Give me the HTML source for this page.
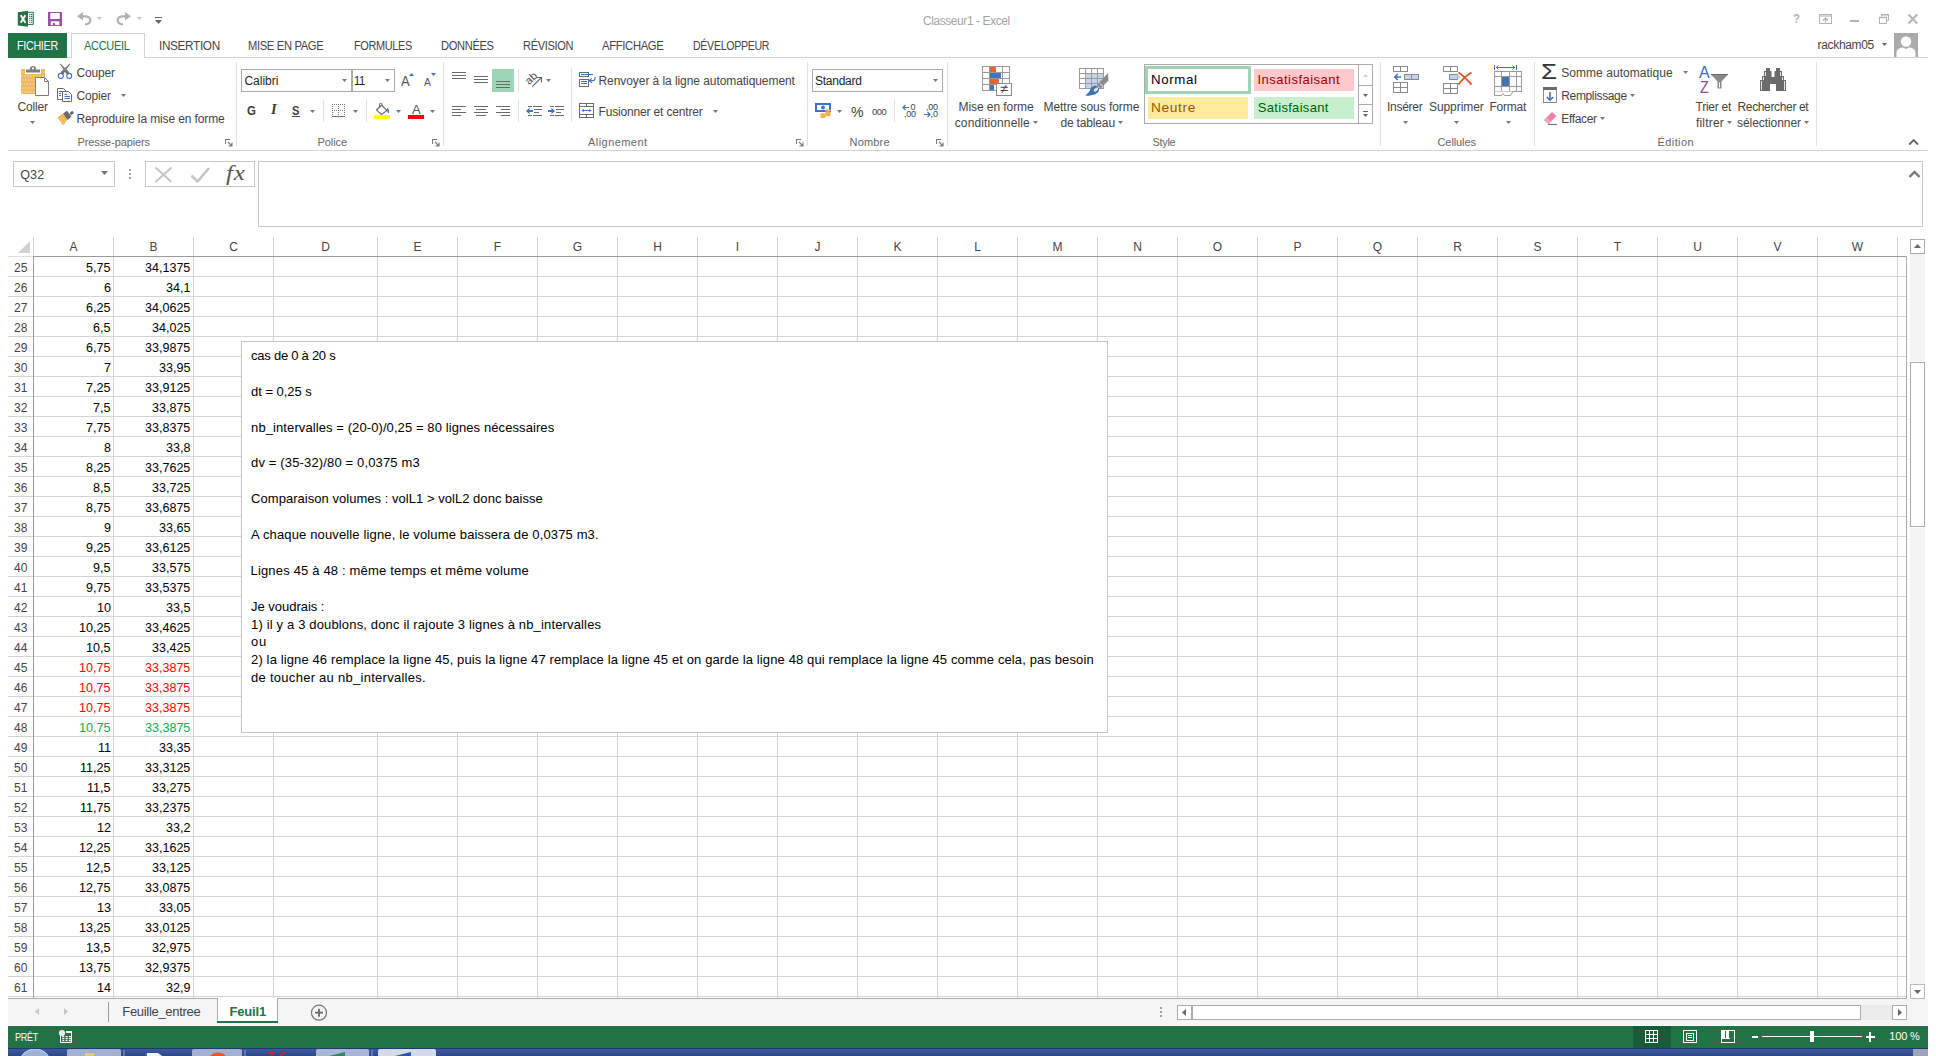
<!DOCTYPE html>
<html lang="fr"><head><meta charset="utf-8"><title>Classeur1 - Excel</title><style>
html,body{margin:0;padding:0;background:#fff;}
body{width:1936px;height:1056px;position:relative;overflow:hidden;font-family:"Liberation Sans",sans-serif;}
body>div,body>span,body>svg{position:absolute;display:block;}
body>span{white-space:pre;line-height:20px;transform-origin:0 0;}
.s{font-family:"Liberation Serif",serif;}
</style></head><body>
<span style="left:923.20px;top:10.84px;letter-spacing:-0.350px;transform:scaleX(0.9856);font-size:12px;color:#a3a3a3;">Classeur1 - Excel</span>
<div style="left:8px;top:33px;width:59px;height:25px;background:#217346;"></div>
<div style="left:67px;top:57px;width:1861px;height:1px;background:#d4d4d4;"></div>
<div style="left:71px;top:33px;width:72px;height:24px;background:#fff;border:1px solid #d4d4d4;border-bottom:none;height:24px;"></div>
<span style="left:16.50px;top:36.24px;letter-spacing:-0.350px;transform:scaleX(0.8976);font-size:12px;color:#fff;">FICHIER</span>
<span style="left:84.40px;top:36.24px;letter-spacing:-0.350px;transform:scaleX(0.9196);font-size:12px;color:#217346;">ACCUEIL</span>
<span style="left:158.52px;top:36.24px;letter-spacing:-0.350px;transform:scaleX(0.9810);font-size:12px;color:#444;">INSERTION</span>
<span style="left:248.40px;top:36.24px;letter-spacing:-0.350px;transform:scaleX(0.9302);font-size:12px;color:#444;">MISE EN PAGE</span>
<span style="left:353.50px;top:36.24px;letter-spacing:-0.350px;transform:scaleX(0.9078);font-size:12px;color:#444;">FORMULES</span>
<span style="left:441.20px;top:36.24px;letter-spacing:-0.350px;transform:scaleX(0.9259);font-size:12px;color:#444;">DONNÉES</span>
<span style="left:523.00px;top:36.24px;letter-spacing:-0.350px;transform:scaleX(0.9183);font-size:12px;color:#444;">RÉVISION</span>
<span style="left:602.00px;top:36.24px;letter-spacing:-0.350px;transform:scaleX(0.9382);font-size:12px;color:#444;">AFFICHAGE</span>
<span style="left:693.00px;top:36.24px;letter-spacing:-0.350px;transform:scaleX(0.8841);font-size:12px;color:#444;">DÉVELOPPEUR</span>
<span style="left:1817.50px;top:34.84px;letter-spacing:-0.323px;font-size:12px;color:#444;">rackham05</span>
<svg style="left:1882px;top:43px" width="5" height="3" viewBox="0 0 5 3"><path d="M0 0H5L2.5 3Z" fill="#666"/></svg>
<div style="left:8px;top:150px;width:1920px;height:1px;background:#d4d4d4;"></div>
<div style="left:236px;top:62px;width:1px;height:84px;background:#e1e1e1;"></div>
<div style="left:443px;top:62px;width:1px;height:84px;background:#e1e1e1;"></div>
<div style="left:807px;top:62px;width:1px;height:84px;background:#e1e1e1;"></div>
<div style="left:947px;top:62px;width:1px;height:84px;background:#e1e1e1;"></div>
<div style="left:1380px;top:62px;width:1px;height:84px;background:#e1e1e1;"></div>
<div style="left:1534px;top:62px;width:1px;height:84px;background:#e1e1e1;"></div>
<div style="left:1816px;top:62px;width:1px;height:84px;background:#e1e1e1;"></div>
<div style="left:323px;top:100px;width:1px;height:22px;background:#e1e1e1;"></div>
<div style="left:366px;top:100px;width:1px;height:22px;background:#e1e1e1;"></div>
<div style="left:518px;top:69px;width:1px;height:23px;background:#e1e1e1;"></div>
<div style="left:518px;top:100px;width:1px;height:22px;background:#e1e1e1;"></div>
<div style="left:571px;top:68px;width:1px;height:54px;background:#e1e1e1;"></div>
<div style="left:894px;top:100px;width:1px;height:22px;background:#e1e1e1;"></div>
<span style="left:77.50px;top:132.19px;letter-spacing:-0.106px;font-size:11px;color:#666;">Presse-papiers</span>
<span style="left:317.50px;top:132.19px;letter-spacing:-0.088px;font-size:11px;color:#666;">Police</span>
<span style="left:588.00px;top:132.19px;letter-spacing:0.447px;font-size:11px;color:#666;">Alignement</span>
<span style="left:849.60px;top:132.19px;letter-spacing:0.159px;font-size:11px;color:#666;">Nombre</span>
<span style="left:1152.50px;top:132.19px;letter-spacing:-0.309px;font-size:11px;color:#666;">Style</span>
<span style="left:1437.50px;top:132.19px;letter-spacing:-0.090px;font-size:11px;color:#666;">Cellules</span>
<span style="left:1657.50px;top:132.19px;letter-spacing:0.414px;font-size:11px;color:#666;">Édition</span>
<span style="left:17.50px;top:96.84px;letter-spacing:-0.169px;font-size:12px;color:#444;">Coller</span>
<svg style="left:30px;top:121px" width="5" height="3" viewBox="0 0 5 3"><path d="M0 0H5L2.5 3Z" fill="#777"/></svg>
<span style="left:76.50px;top:62.84px;letter-spacing:-0.172px;font-size:12px;color:#444;">Couper</span>
<span style="left:76.50px;top:85.84px;letter-spacing:-0.171px;font-size:12px;color:#444;">Copier</span>
<svg style="left:121px;top:94px" width="5" height="3" viewBox="0 0 5 3"><path d="M0 0H5L2.5 3Z" fill="#777"/></svg>
<span style="left:76.50px;top:108.84px;letter-spacing:-0.124px;font-size:12px;color:#444;">Reproduire la mise en forme</span>
<div style="left:241px;top:69px;width:109px;height:21px;background:#fff;border:1px solid #ababab;"></div>
<div style="left:352px;top:69px;width:41px;height:21px;background:#fff;border:1px solid #ababab;"></div>
<span style="left:244.40px;top:70.84px;font-size:12px;color:#1e1e1e;">Calibri</span>
<svg style="left:342px;top:79px" width="5" height="3" viewBox="0 0 5 3"><path d="M0 0H5L2.5 3Z" fill="#777"/></svg>
<span style="left:354.40px;top:70.84px;letter-spacing:-0.350px;transform:scaleX(0.9330);font-size:12px;color:#1e1e1e;">11</span>
<svg style="left:385px;top:79px" width="5" height="3" viewBox="0 0 5 3"><path d="M0 0H5L2.5 3Z" fill="#777"/></svg>
<span style="left:247.25px;top:100.50px;transform:scaleX(0.8750);font-size:13px;color:#3c3c3c;font-weight:bold;">G</span>
<span class="s" style="left:271.04px;top:100.15px;transform:scaleX(1.0357);font-size:14px;color:#3c3c3c;font-weight:bold;font-style:italic;">I</span>
<span style="left:292.00px;top:100.50px;transform:scaleX(0.8611);font-size:13px;color:#3c3c3c;font-weight:bold;">S</span>
<div style="left:292px;top:116px;width:8px;height:1px;background:#444;"></div>
<svg style="left:310px;top:110px" width="5" height="3" viewBox="0 0 5 3"><path d="M0 0H5L2.5 3Z" fill="#777"/></svg>
<svg style="left:353px;top:110px" width="5" height="3" viewBox="0 0 5 3"><path d="M0 0H5L2.5 3Z" fill="#777"/></svg>
<svg style="left:396px;top:110px" width="5" height="3" viewBox="0 0 5 3"><path d="M0 0H5L2.5 3Z" fill="#777"/></svg>
<svg style="left:430px;top:110px" width="5" height="3" viewBox="0 0 5 3"><path d="M0 0H5L2.5 3Z" fill="#777"/></svg>
<div style="left:492px;top:69px;width:22px;height:23px;background:#9fd5b7;"></div>
<span style="left:598.50px;top:70.84px;letter-spacing:-0.069px;font-size:12px;color:#444;">Renvoyer à la ligne automatiquement</span>
<span style="left:598.50px;top:101.84px;letter-spacing:-0.165px;font-size:12px;color:#444;">Fusionner et centrer</span>
<svg style="left:713px;top:110px" width="5" height="3" viewBox="0 0 5 3"><path d="M0 0H5L2.5 3Z" fill="#777"/></svg>
<svg style="left:546px;top:79px" width="5" height="3" viewBox="0 0 5 3"><path d="M0 0H5L2.5 3Z" fill="#777"/></svg>
<div style="left:812px;top:69px;width:129px;height:21px;background:#fff;border:1px solid #ababab;"></div>
<span style="left:815.00px;top:70.84px;letter-spacing:-0.254px;font-size:12px;color:#1e1e1e;">Standard</span>
<svg style="left:933px;top:79px" width="5" height="3" viewBox="0 0 5 3"><path d="M0 0H5L2.5 3Z" fill="#777"/></svg>
<svg style="left:837px;top:110px" width="5" height="3" viewBox="0 0 5 3"><path d="M0 0H5L2.5 3Z" fill="#777"/></svg>
<span style="left:851.25px;top:101.80px;transform:scaleX(0.9423);font-size:15px;color:#444;">%</span>
<span style="left:871.50px;top:101.51px;letter-spacing:-0.350px;transform:scaleX(0.9753);font-size:9.5px;color:#3c3c3c;">000</span>
<span style="left:958.50px;top:96.84px;letter-spacing:-0.071px;font-size:12px;color:#444;">Mise en forme</span>
<span style="left:954.75px;top:112.84px;letter-spacing:0.118px;font-size:12px;color:#444;">conditionnelle</span>
<svg style="left:1033px;top:121px" width="5" height="3" viewBox="0 0 5 3"><path d="M0 0H5L2.5 3Z" fill="#777"/></svg>
<span style="left:1043.50px;top:96.84px;letter-spacing:-0.048px;font-size:12px;color:#444;">Mettre sous forme</span>
<span style="left:1060.40px;top:112.84px;letter-spacing:-0.153px;font-size:12px;color:#444;">de tableau</span>
<svg style="left:1118px;top:121px" width="5" height="3" viewBox="0 0 5 3"><path d="M0 0H5L2.5 3Z" fill="#777"/></svg>
<div style="left:1144px;top:64px;width:227px;height:58px;background:#fff;border:1px solid #ababab;"></div>
<div style="left:1358px;top:65px;width:1px;height:58px;background:#ababab;"></div>
<div style="left:1359px;top:85px;width:13px;height:1px;background:#ababab;"></div>
<div style="left:1359px;top:104px;width:13px;height:1px;background:#ababab;"></div>
<div style="left:1145px;top:66px;width:106px;height:28px;background:#9fd5b7;"></div>
<div style="left:1148px;top:69px;width:100px;height:22px;background:#fff;"></div>
<div style="left:1254px;top:69px;width:100px;height:22px;background:#ffc7ce;"></div>
<div style="left:1148px;top:97px;width:100px;height:22px;background:#ffeb9c;"></div>
<div style="left:1254px;top:97px;width:100px;height:22px;background:#c6efce;"></div>
<span style="left:1151.48px;top:69.50px;letter-spacing:0.600px;transform:scaleX(1.0226);font-size:13px;color:#000;">Normal</span>
<span style="left:1257.40px;top:69.50px;letter-spacing:0.488px;font-size:13px;color:#9c0006;">Insatisfaisant</span>
<span style="left:1151.44px;top:97.50px;letter-spacing:0.600px;transform:scaleX(1.0567);font-size:13px;color:#9c5700;">Neutre</span>
<span style="left:1257.75px;top:97.50px;letter-spacing:0.310px;font-size:13px;color:#006100;">Satisfaisant</span>
<span style="left:1387.00px;top:96.84px;letter-spacing:-0.267px;font-size:12px;color:#444;">Insérer</span>
<svg style="left:1403px;top:121px" width="5" height="3" viewBox="0 0 5 3"><path d="M0 0H5L2.5 3Z" fill="#777"/></svg>
<span style="left:1429.00px;top:96.84px;letter-spacing:-0.076px;font-size:12px;color:#444;">Supprimer</span>
<svg style="left:1454px;top:121px" width="5" height="3" viewBox="0 0 5 3"><path d="M0 0H5L2.5 3Z" fill="#777"/></svg>
<span style="left:1489.40px;top:96.84px;letter-spacing:-0.214px;font-size:12px;color:#444;">Format</span>
<svg style="left:1506px;top:121px" width="5" height="3" viewBox="0 0 5 3"><path d="M0 0H5L2.5 3Z" fill="#777"/></svg>
<span style="left:1561.25px;top:62.84px;letter-spacing:0.044px;font-size:12px;color:#444;">Somme automatique</span>
<svg style="left:1683px;top:71px" width="5" height="3" viewBox="0 0 5 3"><path d="M0 0H5L2.5 3Z" fill="#777"/></svg>
<span style="left:1561.25px;top:85.84px;letter-spacing:-0.350px;font-size:12px;color:#444;">Remplissage</span>
<svg style="left:1630px;top:94px" width="5" height="3" viewBox="0 0 5 3"><path d="M0 0H5L2.5 3Z" fill="#777"/></svg>
<span style="left:1561.25px;top:108.84px;letter-spacing:-0.350px;font-size:12px;color:#444;">Effacer</span>
<svg style="left:1600px;top:117px" width="5" height="3" viewBox="0 0 5 3"><path d="M0 0H5L2.5 3Z" fill="#777"/></svg>
<span style="left:1695.60px;top:96.84px;letter-spacing:-0.275px;font-size:12px;color:#444;">Trier et</span>
<span style="left:1696.00px;top:112.84px;letter-spacing:0.180px;font-size:12px;color:#444;">filtrer</span>
<svg style="left:1727px;top:121px" width="5" height="3" viewBox="0 0 5 3"><path d="M0 0H5L2.5 3Z" fill="#777"/></svg>
<span style="left:1737.50px;top:96.84px;letter-spacing:-0.350px;font-size:12px;color:#444;">Rechercher et</span>
<span style="left:1737.00px;top:112.84px;letter-spacing:-0.064px;font-size:12px;color:#444;">sélectionner</span>
<svg style="left:1804px;top:121px" width="5" height="3" viewBox="0 0 5 3"><path d="M0 0H5L2.5 3Z" fill="#777"/></svg>
<div style="left:13px;top:161px;width:100px;height:24px;background:#fff;border:1px solid #c6c6c6;"></div>
<span style="left:20.20px;top:165.07px;letter-spacing:0.163px;font-size:12.5px;color:#444;">Q32</span>
<svg style="left:101px;top:171px" width="7" height="4" viewBox="0 0 7 4"><path d="M0 0H7L3.5 4Z" fill="#777"/></svg>
<div style="left:129px;top:169px;width:2px;height:2px;background:#a0a0a0;"></div>
<div style="left:129px;top:173px;width:2px;height:2px;background:#a0a0a0;"></div>
<div style="left:129px;top:177px;width:2px;height:2px;background:#a0a0a0;"></div>
<div style="left:145px;top:161px;width:108px;height:24px;background:#fff;border:1px solid #c6c6c6;"></div>
<div style="left:258px;top:161px;width:1663px;height:64px;background:#fff;border:1px solid #c6c6c6;"></div>
<div style="left:8px;top:276px;width:1898px;height:1px;background:#d4d4d4;"></div>
<div style="left:8px;top:296px;width:1898px;height:1px;background:#d4d4d4;"></div>
<div style="left:8px;top:316px;width:1898px;height:1px;background:#d4d4d4;"></div>
<div style="left:8px;top:336px;width:1898px;height:1px;background:#d4d4d4;"></div>
<div style="left:8px;top:356px;width:1898px;height:1px;background:#d4d4d4;"></div>
<div style="left:8px;top:376px;width:1898px;height:1px;background:#d4d4d4;"></div>
<div style="left:8px;top:396px;width:1898px;height:1px;background:#d4d4d4;"></div>
<div style="left:8px;top:416px;width:1898px;height:1px;background:#d4d4d4;"></div>
<div style="left:8px;top:436px;width:1898px;height:1px;background:#d4d4d4;"></div>
<div style="left:8px;top:456px;width:1898px;height:1px;background:#d4d4d4;"></div>
<div style="left:8px;top:476px;width:1898px;height:1px;background:#d4d4d4;"></div>
<div style="left:8px;top:496px;width:1898px;height:1px;background:#d4d4d4;"></div>
<div style="left:8px;top:516px;width:1898px;height:1px;background:#d4d4d4;"></div>
<div style="left:8px;top:536px;width:1898px;height:1px;background:#d4d4d4;"></div>
<div style="left:8px;top:556px;width:1898px;height:1px;background:#d4d4d4;"></div>
<div style="left:8px;top:576px;width:1898px;height:1px;background:#d4d4d4;"></div>
<div style="left:8px;top:596px;width:1898px;height:1px;background:#d4d4d4;"></div>
<div style="left:8px;top:616px;width:1898px;height:1px;background:#d4d4d4;"></div>
<div style="left:8px;top:636px;width:1898px;height:1px;background:#d4d4d4;"></div>
<div style="left:8px;top:656px;width:1898px;height:1px;background:#d4d4d4;"></div>
<div style="left:8px;top:676px;width:1898px;height:1px;background:#d4d4d4;"></div>
<div style="left:8px;top:696px;width:1898px;height:1px;background:#d4d4d4;"></div>
<div style="left:8px;top:716px;width:1898px;height:1px;background:#d4d4d4;"></div>
<div style="left:8px;top:736px;width:1898px;height:1px;background:#d4d4d4;"></div>
<div style="left:8px;top:756px;width:1898px;height:1px;background:#d4d4d4;"></div>
<div style="left:8px;top:776px;width:1898px;height:1px;background:#d4d4d4;"></div>
<div style="left:8px;top:796px;width:1898px;height:1px;background:#d4d4d4;"></div>
<div style="left:8px;top:816px;width:1898px;height:1px;background:#d4d4d4;"></div>
<div style="left:8px;top:836px;width:1898px;height:1px;background:#d4d4d4;"></div>
<div style="left:8px;top:856px;width:1898px;height:1px;background:#d4d4d4;"></div>
<div style="left:8px;top:876px;width:1898px;height:1px;background:#d4d4d4;"></div>
<div style="left:8px;top:896px;width:1898px;height:1px;background:#d4d4d4;"></div>
<div style="left:8px;top:916px;width:1898px;height:1px;background:#d4d4d4;"></div>
<div style="left:8px;top:936px;width:1898px;height:1px;background:#d4d4d4;"></div>
<div style="left:8px;top:956px;width:1898px;height:1px;background:#d4d4d4;"></div>
<div style="left:8px;top:976px;width:1898px;height:1px;background:#d4d4d4;"></div>
<div style="left:8px;top:996px;width:1898px;height:1px;background:#d4d4d4;"></div>
<div style="left:113px;top:237px;width:1px;height:761px;background:#d4d4d4;"></div>
<div style="left:193px;top:237px;width:1px;height:761px;background:#d4d4d4;"></div>
<div style="left:273px;top:237px;width:1px;height:761px;background:#d4d4d4;"></div>
<div style="left:377px;top:237px;width:1px;height:761px;background:#d4d4d4;"></div>
<div style="left:457px;top:237px;width:1px;height:761px;background:#d4d4d4;"></div>
<div style="left:537px;top:237px;width:1px;height:761px;background:#d4d4d4;"></div>
<div style="left:617px;top:237px;width:1px;height:761px;background:#d4d4d4;"></div>
<div style="left:697px;top:237px;width:1px;height:761px;background:#d4d4d4;"></div>
<div style="left:777px;top:237px;width:1px;height:761px;background:#d4d4d4;"></div>
<div style="left:857px;top:237px;width:1px;height:761px;background:#d4d4d4;"></div>
<div style="left:937px;top:237px;width:1px;height:761px;background:#d4d4d4;"></div>
<div style="left:1017px;top:237px;width:1px;height:761px;background:#d4d4d4;"></div>
<div style="left:1097px;top:237px;width:1px;height:761px;background:#d4d4d4;"></div>
<div style="left:1177px;top:237px;width:1px;height:761px;background:#d4d4d4;"></div>
<div style="left:1257px;top:237px;width:1px;height:761px;background:#d4d4d4;"></div>
<div style="left:1337px;top:237px;width:1px;height:761px;background:#d4d4d4;"></div>
<div style="left:1417px;top:237px;width:1px;height:761px;background:#d4d4d4;"></div>
<div style="left:1497px;top:237px;width:1px;height:761px;background:#d4d4d4;"></div>
<div style="left:1577px;top:237px;width:1px;height:761px;background:#d4d4d4;"></div>
<div style="left:1657px;top:237px;width:1px;height:761px;background:#d4d4d4;"></div>
<div style="left:1737px;top:237px;width:1px;height:761px;background:#d4d4d4;"></div>
<div style="left:1817px;top:237px;width:1px;height:761px;background:#d4d4d4;"></div>
<div style="left:1897px;top:237px;width:1px;height:761px;background:#d4d4d4;"></div>
<div style="left:33px;top:256px;width:1874px;height:1px;background:#9b9b9b;"></div>
<div style="left:8px;top:256px;width:25px;height:1px;background:#dcdcdc;"></div>
<div style="left:33px;top:237px;width:1px;height:19px;background:#d4d4d4;"></div>
<div style="left:33px;top:256px;width:1px;height:742px;background:#9b9b9b;"></div>
<div style="left:1906px;top:256px;width:1px;height:743px;background:#ababab;"></div>
<div style="left:8px;top:998px;width:1899px;height:1px;background:#ababab;"></div>
<svg style="left:18px;top:241px" width="12" height="12" viewBox="0 0 12 12"><path d="M12 0V12H0Z" fill="#d2d2d2"/></svg>
<span style="left:69.49px;top:236.84px;font-size:12px;color:#444;">A</span>
<span style="left:149.49px;top:236.84px;font-size:12px;color:#444;">B</span>
<span style="left:229.16px;top:236.84px;font-size:12px;color:#444;">C</span>
<span style="left:321.16px;top:236.84px;font-size:12px;color:#444;">D</span>
<span style="left:413.49px;top:236.84px;font-size:12px;color:#444;">E</span>
<span style="left:493.83px;top:236.84px;font-size:12px;color:#444;">F</span>
<span style="left:572.83px;top:236.84px;font-size:12px;color:#444;">G</span>
<span style="left:653.16px;top:236.84px;font-size:12px;color:#444;">H</span>
<span style="left:735.83px;top:236.84px;font-size:12px;color:#444;">I</span>
<span style="left:814.50px;top:236.84px;font-size:12px;color:#444;">J</span>
<span style="left:893.49px;top:236.84px;font-size:12px;color:#444;">K</span>
<span style="left:974.16px;top:236.84px;font-size:12px;color:#444;">L</span>
<span style="left:1052.50px;top:236.84px;font-size:12px;color:#444;">M</span>
<span style="left:1133.16px;top:236.84px;font-size:12px;color:#444;">N</span>
<span style="left:1212.83px;top:236.84px;font-size:12px;color:#444;">O</span>
<span style="left:1293.49px;top:236.84px;font-size:12px;color:#444;">P</span>
<span style="left:1372.83px;top:236.84px;font-size:12px;color:#444;">Q</span>
<span style="left:1453.16px;top:236.84px;font-size:12px;color:#444;">R</span>
<span style="left:1533.49px;top:236.84px;font-size:12px;color:#444;">S</span>
<span style="left:1613.83px;top:236.84px;font-size:12px;color:#444;">T</span>
<span style="left:1693.16px;top:236.84px;font-size:12px;color:#444;">U</span>
<span style="left:1773.49px;top:236.84px;font-size:12px;color:#444;">V</span>
<span style="left:1851.84px;top:236.84px;font-size:12px;color:#444;">W</span>
<span style="left:13.92px;top:257.84px;letter-spacing:0.200px;font-size:12px;color:#444;">25</span>
<span style="left:86.31px;top:257.50px;transform:scaleX(0.9650);font-size:13px;color:#000;">5,75</span>
<span style="left:145.37px;top:257.50px;transform:scaleX(0.9650);font-size:13px;color:#000;">34,1375</span>
<span style="left:13.92px;top:277.84px;letter-spacing:0.200px;font-size:12px;color:#444;">26</span>
<span style="left:103.75px;top:277.50px;transform:scaleX(0.9650);font-size:13px;color:#000;">6</span>
<span style="left:166.31px;top:277.50px;transform:scaleX(0.9650);font-size:13px;color:#000;">34,1</span>
<span style="left:13.92px;top:297.84px;letter-spacing:0.200px;font-size:12px;color:#444;">27</span>
<span style="left:86.31px;top:297.50px;transform:scaleX(0.9650);font-size:13px;color:#000;">6,25</span>
<span style="left:145.37px;top:297.50px;transform:scaleX(0.9650);font-size:13px;color:#000;">34,0625</span>
<span style="left:13.92px;top:317.84px;letter-spacing:0.200px;font-size:12px;color:#444;">28</span>
<span style="left:93.28px;top:317.50px;transform:scaleX(0.9650);font-size:13px;color:#000;">6,5</span>
<span style="left:152.35px;top:317.50px;transform:scaleX(0.9650);font-size:13px;color:#000;">34,025</span>
<span style="left:13.92px;top:337.84px;letter-spacing:0.200px;font-size:12px;color:#444;">29</span>
<span style="left:86.31px;top:337.50px;transform:scaleX(0.9650);font-size:13px;color:#000;">6,75</span>
<span style="left:145.37px;top:337.50px;transform:scaleX(0.9650);font-size:13px;color:#000;">33,9875</span>
<span style="left:13.92px;top:357.84px;letter-spacing:0.200px;font-size:12px;color:#444;">30</span>
<span style="left:103.75px;top:357.50px;transform:scaleX(0.9650);font-size:13px;color:#000;">7</span>
<span style="left:159.33px;top:357.50px;transform:scaleX(0.9650);font-size:13px;color:#000;">33,95</span>
<span style="left:13.92px;top:377.84px;letter-spacing:0.200px;font-size:12px;color:#444;">31</span>
<span style="left:86.31px;top:377.50px;transform:scaleX(0.9650);font-size:13px;color:#000;">7,25</span>
<span style="left:145.37px;top:377.50px;transform:scaleX(0.9650);font-size:13px;color:#000;">33,9125</span>
<span style="left:13.92px;top:397.84px;letter-spacing:0.200px;font-size:12px;color:#444;">32</span>
<span style="left:93.28px;top:397.50px;transform:scaleX(0.9650);font-size:13px;color:#000;">7,5</span>
<span style="left:152.35px;top:397.50px;transform:scaleX(0.9650);font-size:13px;color:#000;">33,875</span>
<span style="left:13.92px;top:417.84px;letter-spacing:0.200px;font-size:12px;color:#444;">33</span>
<span style="left:86.31px;top:417.50px;transform:scaleX(0.9650);font-size:13px;color:#000;">7,75</span>
<span style="left:145.37px;top:417.50px;transform:scaleX(0.9650);font-size:13px;color:#000;">33,8375</span>
<span style="left:13.92px;top:437.84px;letter-spacing:0.200px;font-size:12px;color:#444;">34</span>
<span style="left:103.75px;top:437.50px;transform:scaleX(0.9650);font-size:13px;color:#000;">8</span>
<span style="left:166.31px;top:437.50px;transform:scaleX(0.9650);font-size:13px;color:#000;">33,8</span>
<span style="left:13.92px;top:457.84px;letter-spacing:0.200px;font-size:12px;color:#444;">35</span>
<span style="left:86.31px;top:457.50px;transform:scaleX(0.9650);font-size:13px;color:#000;">8,25</span>
<span style="left:145.37px;top:457.50px;transform:scaleX(0.9650);font-size:13px;color:#000;">33,7625</span>
<span style="left:13.92px;top:477.84px;letter-spacing:0.200px;font-size:12px;color:#444;">36</span>
<span style="left:93.28px;top:477.50px;transform:scaleX(0.9650);font-size:13px;color:#000;">8,5</span>
<span style="left:152.35px;top:477.50px;transform:scaleX(0.9650);font-size:13px;color:#000;">33,725</span>
<span style="left:13.92px;top:497.84px;letter-spacing:0.200px;font-size:12px;color:#444;">37</span>
<span style="left:86.31px;top:497.50px;transform:scaleX(0.9650);font-size:13px;color:#000;">8,75</span>
<span style="left:145.37px;top:497.50px;transform:scaleX(0.9650);font-size:13px;color:#000;">33,6875</span>
<span style="left:13.92px;top:517.84px;letter-spacing:0.200px;font-size:12px;color:#444;">38</span>
<span style="left:103.75px;top:517.50px;transform:scaleX(0.9650);font-size:13px;color:#000;">9</span>
<span style="left:159.33px;top:517.50px;transform:scaleX(0.9650);font-size:13px;color:#000;">33,65</span>
<span style="left:13.92px;top:537.84px;letter-spacing:0.200px;font-size:12px;color:#444;">39</span>
<span style="left:86.31px;top:537.50px;transform:scaleX(0.9650);font-size:13px;color:#000;">9,25</span>
<span style="left:145.37px;top:537.50px;transform:scaleX(0.9650);font-size:13px;color:#000;">33,6125</span>
<span style="left:13.92px;top:557.84px;letter-spacing:0.200px;font-size:12px;color:#444;">40</span>
<span style="left:93.28px;top:557.50px;transform:scaleX(0.9650);font-size:13px;color:#000;">9,5</span>
<span style="left:152.35px;top:557.50px;transform:scaleX(0.9650);font-size:13px;color:#000;">33,575</span>
<span style="left:13.92px;top:577.84px;letter-spacing:0.200px;font-size:12px;color:#444;">41</span>
<span style="left:86.31px;top:577.50px;transform:scaleX(0.9650);font-size:13px;color:#000;">9,75</span>
<span style="left:145.37px;top:577.50px;transform:scaleX(0.9650);font-size:13px;color:#000;">33,5375</span>
<span style="left:13.92px;top:597.84px;letter-spacing:0.200px;font-size:12px;color:#444;">42</span>
<span style="left:96.77px;top:597.50px;transform:scaleX(0.9650);font-size:13px;color:#000;">10</span>
<span style="left:166.31px;top:597.50px;transform:scaleX(0.9650);font-size:13px;color:#000;">33,5</span>
<span style="left:13.92px;top:617.84px;letter-spacing:0.200px;font-size:12px;color:#444;">43</span>
<span style="left:79.33px;top:617.50px;transform:scaleX(0.9650);font-size:13px;color:#000;">10,25</span>
<span style="left:145.37px;top:617.50px;transform:scaleX(0.9650);font-size:13px;color:#000;">33,4625</span>
<span style="left:13.92px;top:637.84px;letter-spacing:0.200px;font-size:12px;color:#444;">44</span>
<span style="left:86.31px;top:637.50px;transform:scaleX(0.9650);font-size:13px;color:#000;">10,5</span>
<span style="left:152.35px;top:637.50px;transform:scaleX(0.9650);font-size:13px;color:#000;">33,425</span>
<span style="left:13.92px;top:657.84px;letter-spacing:0.200px;font-size:12px;color:#444;">45</span>
<span style="left:79.33px;top:657.50px;transform:scaleX(0.9650);font-size:13px;color:#ff0000;">10,75</span>
<span style="left:145.37px;top:657.50px;transform:scaleX(0.9650);font-size:13px;color:#ff0000;">33,3875</span>
<span style="left:13.92px;top:677.84px;letter-spacing:0.200px;font-size:12px;color:#444;">46</span>
<span style="left:79.33px;top:677.50px;transform:scaleX(0.9650);font-size:13px;color:#ff0000;">10,75</span>
<span style="left:145.37px;top:677.50px;transform:scaleX(0.9650);font-size:13px;color:#ff0000;">33,3875</span>
<span style="left:13.92px;top:697.84px;letter-spacing:0.200px;font-size:12px;color:#444;">47</span>
<span style="left:79.33px;top:697.50px;transform:scaleX(0.9650);font-size:13px;color:#ff0000;">10,75</span>
<span style="left:145.37px;top:697.50px;transform:scaleX(0.9650);font-size:13px;color:#ff0000;">33,3875</span>
<span style="left:13.92px;top:717.84px;letter-spacing:0.200px;font-size:12px;color:#444;">48</span>
<span style="left:79.33px;top:717.50px;transform:scaleX(0.9650);font-size:13px;color:#00b050;">10,75</span>
<span style="left:145.37px;top:717.50px;transform:scaleX(0.9650);font-size:13px;color:#00b050;">33,3875</span>
<span style="left:13.92px;top:737.84px;letter-spacing:0.200px;font-size:12px;color:#444;">49</span>
<span style="left:97.70px;top:737.50px;transform:scaleX(0.9650);font-size:13px;color:#000;">11</span>
<span style="left:159.33px;top:737.50px;transform:scaleX(0.9650);font-size:13px;color:#000;">33,35</span>
<span style="left:13.92px;top:757.84px;letter-spacing:0.200px;font-size:12px;color:#444;">50</span>
<span style="left:80.26px;top:757.50px;transform:scaleX(0.9650);font-size:13px;color:#000;">11,25</span>
<span style="left:145.37px;top:757.50px;transform:scaleX(0.9650);font-size:13px;color:#000;">33,3125</span>
<span style="left:13.92px;top:777.84px;letter-spacing:0.200px;font-size:12px;color:#444;">51</span>
<span style="left:87.24px;top:777.50px;transform:scaleX(0.9650);font-size:13px;color:#000;">11,5</span>
<span style="left:152.35px;top:777.50px;transform:scaleX(0.9650);font-size:13px;color:#000;">33,275</span>
<span style="left:13.92px;top:797.84px;letter-spacing:0.200px;font-size:12px;color:#444;">52</span>
<span style="left:80.26px;top:797.50px;transform:scaleX(0.9650);font-size:13px;color:#000;">11,75</span>
<span style="left:145.37px;top:797.50px;transform:scaleX(0.9650);font-size:13px;color:#000;">33,2375</span>
<span style="left:13.92px;top:817.84px;letter-spacing:0.200px;font-size:12px;color:#444;">53</span>
<span style="left:96.77px;top:817.50px;transform:scaleX(0.9650);font-size:13px;color:#000;">12</span>
<span style="left:166.31px;top:817.50px;transform:scaleX(0.9650);font-size:13px;color:#000;">33,2</span>
<span style="left:13.92px;top:837.84px;letter-spacing:0.200px;font-size:12px;color:#444;">54</span>
<span style="left:79.33px;top:837.50px;transform:scaleX(0.9650);font-size:13px;color:#000;">12,25</span>
<span style="left:145.37px;top:837.50px;transform:scaleX(0.9650);font-size:13px;color:#000;">33,1625</span>
<span style="left:13.92px;top:857.84px;letter-spacing:0.200px;font-size:12px;color:#444;">55</span>
<span style="left:86.31px;top:857.50px;transform:scaleX(0.9650);font-size:13px;color:#000;">12,5</span>
<span style="left:152.35px;top:857.50px;transform:scaleX(0.9650);font-size:13px;color:#000;">33,125</span>
<span style="left:13.92px;top:877.84px;letter-spacing:0.200px;font-size:12px;color:#444;">56</span>
<span style="left:79.33px;top:877.50px;transform:scaleX(0.9650);font-size:13px;color:#000;">12,75</span>
<span style="left:145.37px;top:877.50px;transform:scaleX(0.9650);font-size:13px;color:#000;">33,0875</span>
<span style="left:13.92px;top:897.84px;letter-spacing:0.200px;font-size:12px;color:#444;">57</span>
<span style="left:96.77px;top:897.50px;transform:scaleX(0.9650);font-size:13px;color:#000;">13</span>
<span style="left:159.33px;top:897.50px;transform:scaleX(0.9650);font-size:13px;color:#000;">33,05</span>
<span style="left:13.92px;top:917.84px;letter-spacing:0.200px;font-size:12px;color:#444;">58</span>
<span style="left:79.33px;top:917.50px;transform:scaleX(0.9650);font-size:13px;color:#000;">13,25</span>
<span style="left:145.37px;top:917.50px;transform:scaleX(0.9650);font-size:13px;color:#000;">33,0125</span>
<span style="left:13.92px;top:937.84px;letter-spacing:0.200px;font-size:12px;color:#444;">59</span>
<span style="left:86.31px;top:937.50px;transform:scaleX(0.9650);font-size:13px;color:#000;">13,5</span>
<span style="left:152.35px;top:937.50px;transform:scaleX(0.9650);font-size:13px;color:#000;">32,975</span>
<span style="left:13.92px;top:957.84px;letter-spacing:0.200px;font-size:12px;color:#444;">60</span>
<span style="left:79.33px;top:957.50px;transform:scaleX(0.9650);font-size:13px;color:#000;">13,75</span>
<span style="left:145.37px;top:957.50px;transform:scaleX(0.9650);font-size:13px;color:#000;">32,9375</span>
<span style="left:13.92px;top:977.84px;letter-spacing:0.200px;font-size:12px;color:#444;">61</span>
<span style="left:96.77px;top:977.50px;transform:scaleX(0.9650);font-size:13px;color:#000;">14</span>
<span style="left:166.31px;top:977.50px;transform:scaleX(0.9650);font-size:13px;color:#000;">32,9</span>
<div style="left:241px;top:341px;width:865px;height:390px;background:#fff;border:1px solid #c4c4c4;"></div>
<span style="left:251.10px;top:345.90px;letter-spacing:-0.255px;font-size:13px;color:#000;">cas de 0 à 20 s</span>
<span style="left:251.10px;top:381.90px;letter-spacing:-0.047px;font-size:13px;color:#000;">dt = 0,25 s</span>
<span style="left:251.10px;top:417.90px;letter-spacing:0.091px;font-size:13px;color:#000;">nb_intervalles = (20-0)/0,25 = 80 lignes nécessaires</span>
<span style="left:251.10px;top:452.90px;letter-spacing:0.145px;font-size:13px;color:#000;">dv = (35-32)/80 = 0,0375 m3</span>
<span style="left:251.10px;top:488.90px;letter-spacing:0.035px;font-size:13px;color:#000;">Comparaison volumes : volL1 &gt; volL2 donc baisse</span>
<span style="left:251.10px;top:524.90px;letter-spacing:0.140px;font-size:13px;color:#000;">A chaque nouvelle ligne, le volume baissera de 0,0375 m3.</span>
<span style="left:250.50px;top:560.90px;letter-spacing:0.175px;font-size:13px;color:#000;">Lignes 45 à 48 : même temps et même volume</span>
<span style="left:251.10px;top:596.90px;letter-spacing:-0.033px;font-size:13px;color:#000;">Je voudrais :</span>
<span style="left:251.10px;top:614.90px;letter-spacing:0.154px;font-size:13px;color:#000;">1) il y a 3 doublons, donc il rajoute 3 lignes à nb_intervalles</span>
<span style="left:251.10px;top:631.90px;letter-spacing:0.570px;font-size:13px;color:#000;">ou</span>
<span style="left:251.10px;top:649.90px;letter-spacing:0.119px;font-size:13px;color:#000;">2) la ligne 46 remplace la ligne 45, puis la ligne 47 remplace la ligne 45 et on garde la ligne 48 qui remplace la ligne 45 comme cela, pas besoin</span>
<span style="left:251.10px;top:667.90px;letter-spacing:0.270px;font-size:13px;color:#000;">de toucher au nb_intervalles.</span>
<div style="left:8px;top:999px;width:1920px;height:26px;background:#f5f5f5;"></div>
<div style="left:218px;top:998px;width:59px;height:23px;background:#fff;"></div>
<div style="left:217px;top:999px;width:1px;height:24px;background:#ababab;"></div>
<div style="left:277px;top:999px;width:1px;height:24px;background:#ababab;"></div>
<div style="left:217px;top:1021px;width:61px;height:2px;background:#217346;"></div>
<div style="left:108px;top:1002px;width:1px;height:20px;background:#999;"></div>
<svg style="left:35px;top:1008px" width="4" height="7" viewBox="0 0 4 7"><path d="M4 0V7L0 3.5Z" fill="#c6c6c6"/></svg>
<svg style="left:64px;top:1008px" width="4" height="7" viewBox="0 0 4 7"><path d="M0 0V7L4 3.5Z" fill="#c6c6c6"/></svg>
<span style="left:122.30px;top:1002.10px;letter-spacing:-0.312px;font-size:13px;color:#444;">Feuille_entree</span>
<span style="left:229.60px;top:1002.10px;letter-spacing:-0.207px;font-size:13px;color:#217346;font-weight:bold;">Feuil1</span>
<svg style="left:310px;top:1003.5px" width="18" height="18" viewBox="0 0 18 18"><circle cx="9" cy="8.7" r="7.5" fill="none" stroke="#777" stroke-width="1.2"/><path d="M9 4.7V12.7M5 8.7H13" stroke="#666" stroke-width="1.8"/></svg>
<div style="left:1160px;top:1007px;width:2px;height:2px;background:#a0a0a0;"></div>
<div style="left:1160px;top:1011px;width:2px;height:2px;background:#a0a0a0;"></div>
<div style="left:1160px;top:1015px;width:2px;height:2px;background:#a0a0a0;"></div>
<div style="left:1177px;top:1005px;width:13px;height:13px;background:#fff;border:1px solid #ababab;"></div>
<svg style="left:1182px;top:1009px" width="4" height="7" viewBox="0 0 4 7"><path d="M4 0V7L0 3.5Z" fill="#666"/></svg>
<div style="left:1192px;top:1005px;width:667px;height:13px;background:#fff;border:1px solid #ababab;"></div>
<div style="left:1861px;top:1005px;width:31px;height:15px;background:#ebebeb;"></div>
<div style="left:1892px;top:1005px;width:13px;height:13px;background:#fff;border:1px solid #ababab;"></div>
<svg style="left:1898px;top:1009px" width="4" height="7" viewBox="0 0 4 7"><path d="M0 0V7L4 3.5Z" fill="#666"/></svg>
<div style="left:1910px;top:254px;width:15px;height:730px;background:#f3f3f3;"></div>
<div style="left:1910px;top:239px;width:13px;height:13px;background:#fff;border:1px solid #ababab;"></div>
<svg style="left:1914px;top:244px" width="7" height="4" viewBox="0 0 7 4"><path d="M0 4H7L3.5 0Z" fill="#666"/></svg>
<div style="left:1910px;top:984px;width:13px;height:13px;background:#fff;border:1px solid #b8b8b8;"></div>
<svg style="left:1914px;top:990px" width="7" height="4" viewBox="0 0 7 4"><path d="M0 0H7L3.5 4Z" fill="#666"/></svg>
<div style="left:1910px;top:361px;width:15px;height:167px;background:#fff;"></div>
<div style="left:1910px;top:362px;width:13px;height:163px;background:#fff;border:1px solid #ababab;"></div>
<div style="left:8px;top:1026px;width:1920px;height:22px;background:#217346;"></div>
<div style="left:1633px;top:1026px;width:38px;height:22px;background:#185c37;"></div>
<span style="left:15.40px;top:1026.99px;letter-spacing:-0.350px;transform:scaleX(0.8261);font-size:11px;color:#fff;">PRÊT</span>
<span style="left:1889.30px;top:1026.19px;letter-spacing:-0.177px;font-size:11px;color:#fff;">100 %</span>
<div style="left:1752px;top:1036px;width:6px;height:2px;background:#fff;"></div>
<div style="left:1762px;top:1036px;width:100px;height:1px;background:#fff;"></div>
<div style="left:1810px;top:1031px;width:4px;height:11px;background:#fff;"></div>
<div style="left:1866px;top:1036px;width:9px;height:2px;background:#fff;"></div>
<div style="left:1869px;top:1032px;width:2px;height:10px;background:#fff;"></div>
<div style="left:8px;top:1048px;width:1920px;height:8px;background:linear-gradient(#22396f 0,#22396f 1px,#3d5b9f 1px,#2c4788 8px);"></div>
<svg style="left:17px;top:10px" width="18" height="18" viewBox="17 10 18 18"><path d="M27 12.300H33.300V24.400H27Z" fill="#fff" stroke="#217346" stroke-width="1"/><path d="M29.200 14.6h1.200M31 14.6h1.400M29.200 16.5h1.200M31 16.5h1.400M29.200 18.4h1.200M31 18.4h1.400M29.200 20.3h1.200M31 20.3h1.400M29.200 22.2h1.200M31 22.2h1.400" stroke="#217346" stroke-width="1.100"/><path d="M17.800 12.300L28 10.700V26.800L17.800 25.500Z" fill="#217346"/><path d="M20.700 15.300L25.400 22.700M25.400 15.300L20.700 22.700" stroke="#fff" stroke-width="2"/></svg>
<svg style="left:48px;top:12px" width="14" height="14" viewBox="48 12 14 14"><rect x="48" y="12" width="14" height="14" fill="#9a4fa0"/><rect x="50.300" y="13" width="9.500" height="6" fill="#fff"/><rect x="50.700" y="21.300" width="8.700" height="3.800" fill="#fff"/><rect x="53" y="23" width="2.100" height="2.100" fill="#9a4fa0"/></svg>
<svg style="left:76px;top:11px" width="16" height="15" viewBox="76 11 16 15"><path d="M81.500 16.300H85.500C92 16.300 92 24 85 24.300" fill="none" stroke="#b2b2b2" stroke-width="2.200"/><path d="M77 16.200L83 12V20.400Z" fill="#b2b2b2"/></svg>
<svg style="left:116px;top:11px" width="16" height="15" viewBox="116 11 16 15"><path d="M126.500 16.300H122.500C116 16.300 116 24 123 24.300" fill="none" stroke="#b2b2b2" stroke-width="2.200"/><path d="M131 16.200L125 12V20.400Z" fill="#b2b2b2"/></svg>
<svg style="left:97px;top:17px" width="5" height="3" viewBox="0 0 5 3"><path d="M0 0H5L2.5 3Z" fill="#c4c4c4"/></svg>
<svg style="left:137px;top:17px" width="5" height="3" viewBox="0 0 5 3"><path d="M0 0H5L2.5 3Z" fill="#c4c4c4"/></svg>
<div style="left:155px;top:17px;width:7px;height:1px;background:#666;"></div>
<svg style="left:155px;top:20px" width="7" height="4" viewBox="0 0 7 4"><path d="M0 0H7L3.5 4Z" fill="#666"/></svg>
<span style="left:1793.00px;top:9.25px;transform:scaleX(0.8750);font-size:13px;color:#b3b3b3;font-weight:bold;">?</span>
<svg style="left:1819px;top:14px" width="13" height="10" viewBox="1819 14 13 10"><rect x="1819.5" y="14.500" width="12" height="9" fill="none" stroke="#b3b3b3"/><path d="M1819 16H1832" stroke="#b3b3b3" stroke-width="1"/><path d="M1825.5 22.5V18.500M1823 20.5L1825.5 18L1828 20.5" fill="none" stroke="#b3b3b3" stroke-width="1.2"/></svg>
<div style="left:1850px;top:20px;width:9px;height:2px;background:#b3b3b3;"></div>
<svg style="left:1879px;top:14px" width="10" height="10" viewBox="1879 14 10 10"><path d="M1881.5 16.5V14.5H1888.5V20.5H1886.5" fill="none" stroke="#b3b3b3"/><rect x="1879.5" y="17.5" width="7" height="6" fill="none" stroke="#b3b3b3"/><path d="M1879 17.5H1887M1881 14.8H1889" stroke="#b3b3b3" stroke-width="1.6"/></svg>
<svg style="left:1907px;top:13px" width="12" height="12" viewBox="1907 13 12 12"><path d="M1908.500 14.5L1917.2 23.500M1917.2 14.5L1908.5 23.5" stroke="#b3b3b3" stroke-width="2"/></svg>
<svg style="left:1894px;top:33px" width="24" height="24" viewBox="1894 33 24 24"><rect x="1894" y="33" width="24" height="24" fill="#ababab"/><circle cx="1906" cy="41.5" r="5.2" fill="#fff"/><path d="M1896.500 57V53C1896.5 49 1900 47.5 1903 47.5L1906 49L1909 47.5C1912 47.5 1915.500 49 1915.5 53V57Z" fill="#fff"/></svg>
<svg style="left:20px;top:65px" width="30" height="32" viewBox="20 65 30 32"><rect x="21" y="69" width="24" height="25" rx="1" fill="#f2b964"/><path d="M22 72h23M21 76h24M22 80h23M21 84h24M22 88h23M21 92h24" stroke="#f7d193" stroke-width="1.500" stroke-dasharray="1.500 1.500"/><rect x="25" y="69" width="16" height="5" fill="#fff"/><path d="M26 72.600V69.500H30V68.500Q30 66 33 66Q36 66 36 68.500V69.500H40V72.600Z" fill="#7d7d7d"/><rect x="32" y="67.500" width="2" height="1.800" fill="#fff"/><path d="M35.500 77.500H44.500L48.500 81.500V95.500H35.500Z" fill="#fff" stroke="#7d7d7d"/><path d="M44.500 77.500V81.500H48.500" fill="none" stroke="#7d7d7d"/></svg>
<svg style="left:57px;top:63px" width="16" height="17" viewBox="57 63 16 17"><path d="M60.300 64L67 74L69 72.400ZM69.700 64L63 74L61 72.400Z" fill="#6a6a6a" stroke="#6a6a6a" stroke-width="0.800"/><circle cx="60.800" cy="75.900" r="2.500" fill="none" stroke="#3f74b8" stroke-width="1.100"/><circle cx="69.200" cy="75.900" r="2.500" fill="none" stroke="#3f74b8" stroke-width="1.100"/></svg>
<svg style="left:56px;top:87px" width="17" height="16" viewBox="56 87 17 16"><path d="M57.500 88.500H63.500L66.5 91.5V99.500H57.5Z" fill="#fff" stroke="#6a6a6a"/><path d="M59 91.500H62M59 93.5H61M59 95.500H61" stroke="#3f74b8"/><path d="M62.500 91.5H68.500L71.5 94.500V101.5H62.5Z" fill="#fff" stroke="#6a6a6a"/><path d="M64.500 96.5H70M64.5 98.500H70M64.5 94.500H67" stroke="#3f74b8"/></svg>
<svg style="left:56px;top:110px" width="18" height="16" viewBox="56 110 18 16"><path d="M57.500 117.5L63 113.500L67.5 119.5L63 125.500Z" fill="#f0b347"/><path d="M59.500 118.5L64 124M61.5 116.500L66 122" stroke="#f8d592" stroke-width="0.8"/><path d="M63 113.500L67 110.800L71.500 116.500L67.500 120Z" fill="#6a6a6a"/><path d="M69.500 113L72.300 110.800L74 113L71.200 115.200Z" fill="#6a6a6a"/></svg>
<span style="left:401.25px;top:71.15px;transform:scaleX(0.9350);font-size:14px;color:#555;">A</span>
<span style="left:424.00px;top:72.19px;transform:scaleX(0.9375);font-size:11px;color:#555;">A</span>
<svg style="left:409px;top:73px" width="5" height="3" viewBox="0 0 5 3"><path d="M0 3H5L2.500 0Z" fill="#3f74b8"/></svg>
<svg style="left:431px;top:73px" width="5" height="3" viewBox="0 0 5 3"><path d="M0 0H5L2.500 3Z" fill="#3f74b8"/></svg>
<svg style="left:332px;top:104px" width="14" height="14" viewBox="332 104 14 14"><path d="M332 104h1v1h-1zM334 104h1v1h-1zM336 104h1v1h-1zM338 104h1v1h-1zM340 104h1v1h-1zM342 104h1v1h-1zM344 104h1v1h-1zM332 110h1v1h-1zM334 110h1v1h-1zM336 110h1v1h-1zM338 110h1v1h-1zM340 110h1v1h-1zM342 110h1v1h-1zM344 110h1v1h-1zM332 104h1v1h-1zM332 106h1v1h-1zM332 108h1v1h-1zM332 110h1v1h-1zM332 112h1v1h-1zM332 114h1v1h-1zM338 104h1v1h-1zM338 106h1v1h-1zM338 108h1v1h-1zM338 110h1v1h-1zM338 112h1v1h-1zM338 114h1v1h-1zM344 104h1v1h-1zM344 106h1v1h-1zM344 108h1v1h-1zM344 110h1v1h-1zM344 112h1v1h-1zM344 114h1v1h-1z" fill="#777" shape-rendering="crispEdges"/><path d="M332 116.500H345" stroke="#6a6a6a" shape-rendering="crispEdges"/></svg>
<svg style="left:373px;top:102px" width="18" height="18" viewBox="373 102 18 18"><rect x="374" y="115" width="16" height="4" fill="#ffff00"/><path d="M376.500 110L381.500 105L387 110.500L381.5 114.500Z" fill="#fff" stroke="#6a6a6a" stroke-width="1.1"/><path d="M379.500 108V104.200Q379.500 103.300 380.800 103.300Q382 103.300 382 104.200V106" fill="none" stroke="#6a6a6a" stroke-width="1"/><path d="M387.200 107.500Q390 110 388.800 113.500Q386.500 112 387.200 107.500Z" fill="#3f74b8"/></svg>
<span style="left:412.00px;top:99.50px;font-size:13px;color:#555;">A</span>
<div style="left:408px;top:115px;width:16px;height:4px;background:#ff0000;"></div>
<svg style="left:452px;top:70px" width="60" height="20" viewBox="452 70 60 20"><path d="M452 72.5H466M452 75.5H466M452 78.5H466M474 76.5H488M474 79.5H488M474 82.5H488M496 81.5H510M496 84.5H510M496 87.5H510" stroke="#6a6a6a" stroke-width="1" shape-rendering="crispEdges" fill="none"/></svg>
<svg style="left:452px;top:104px" width="60" height="14" viewBox="452 104 60 14"><path d="M452 106.5H466M452 109.5H461M452 112.5H466M452 115.5H461M474 106.5H488M476 109.5H486M474 112.5H488M476 115.5H486M496 106.5H510M501 109.5H510M496 112.5H510M501 115.5H510" stroke="#6a6a6a" stroke-width="1" shape-rendering="crispEdges" fill="none"/></svg>
<svg style="left:524px;top:70px" width="20" height="18" viewBox="524 70 20 18"><text x="0" y="0" transform="translate(529.300 85.200) rotate(-45)" font-size="11" fill="#4a4a4a" font-family="Liberation Sans, sans-serif">ab</text><path d="M532.300 86.700L541.200 77.700" stroke="#6a6a6a" stroke-width="1.200"/><path d="M536.500 77.500H541.500V82.500" fill="none" stroke="#6a6a6a" stroke-width="1.200"/></svg>
<svg style="left:525px;top:104px" width="40" height="14" viewBox="525 104 40 14"><path d="M528 106.5H532M533 106.5H542M534 109.5H542M534 112.5H539M528 115.5H532M533 115.5H542M550 106.5H554M555 106.5H564M556 109.5H564M556 112.5H561M550 115.5H554M555 115.5H564" stroke="#6a6a6a" stroke-width="1" shape-rendering="crispEdges" fill="none"/><path d="M526 111L529.500 107.800V110H533V112H529.500V114.200Z" fill="#3f74b8"/><path d="M555 111L551.500 107.800V110H548V112H551.500V114.200Z" fill="#3f74b8"/></svg>
<svg style="left:578px;top:71px" width="19" height="17" viewBox="578 71 19 17"><rect x="579.500" y="72.500" width="9" height="4" fill="#fff" stroke="#6a6a6a"/><rect x="579.500" y="79.500" width="9" height="7" fill="#fff" stroke="#6a6a6a"/><path d="M581 74.500H593M581 81.500H587M581 83.500H587" stroke="#3f74b8" shape-rendering="crispEdges"/><path d="M595 77V78.500Q595 80.600 592.500 80.600H589.500M591.800 78.300L589.300 80.600L591.800 82.900" fill="none" stroke="#3f74b8" stroke-width="1.100"/></svg>
<svg style="left:578px;top:102px" width="17" height="17" viewBox="578 102 17 17"><path d="M579.500 103.500H593.500V117.500H579.500ZM579.500 106.500H593.500M579.500 114.500H593.500M586.500 103.500V106.500M586.500 114.500V117.500" fill="none" stroke="#6a6a6a" shape-rendering="crispEdges"/><path d="M582.500 110.500H590.500" stroke="#3f74b8" stroke-width="1"/><path d="M581.500 110.500L583.700 108.700V112.300ZM591.500 110.500L589.300 108.700V112.300Z" fill="#3f74b8"/></svg>
<svg style="left:814px;top:102px" width="18" height="17" viewBox="814 102 18 17"><rect x="815" y="103" width="16" height="9" fill="#3f74b8"/><rect x="817" y="105" width="12" height="5" fill="#fff"/><circle cx="823" cy="107.500" r="2" fill="#3f74b8"/><ellipse cx="828" cy="110.500" rx="3" ry="1.300" fill="#f0b04a"/><ellipse cx="828" cy="112.700" rx="3" ry="1.300" fill="#f0b04a"/><ellipse cx="828" cy="114.900" rx="3" ry="1.300" fill="#f0b04a"/><ellipse cx="823" cy="114.500" rx="3" ry="1.300" fill="#f0b04a"/><ellipse cx="823" cy="116.700" rx="3" ry="1.300" fill="#f0b04a"/></svg>
<svg style="left:901px;top:103px" width="16" height="16" viewBox="901 103 16 16"><path d="M909 107.500H903M905.500 105L903 107.500L905.500 110" fill="none" stroke="#3f74b8" stroke-width="1.2"/></svg>
<span style="left:910.50px;top:97.38px;font-size:9px;color:#444;">0</span>
<span style="left:904.00px;top:104.38px;letter-spacing:-0.253px;font-size:9px;color:#444;">,00</span>
<span style="left:926.00px;top:97.38px;letter-spacing:-0.253px;font-size:9px;color:#444;">,00</span>
<svg style="left:923px;top:103px" width="16" height="16" viewBox="923 103 16 16"><path d="M924 114.500H930M927.500 112L930 114.500L927.500 117" fill="none" stroke="#3f74b8" stroke-width="1.2"/></svg>
<span style="left:930.50px;top:104.38px;font-size:9px;color:#444;">,0</span>
<svg style="left:981px;top:65px" width="32" height="32" viewBox="981 65 32 32"><rect x="990" y="67" width="6" height="5" fill="#e8642d"/><rect x="990" y="73" width="11" height="5" fill="#3f74b8"/><rect x="990" y="79" width="9" height="5" fill="#e8642d"/><rect x="990" y="85" width="4" height="5" fill="#3f74b8"/><path d="M982.500 66.500H1009.500V90.500H982.500ZM982.500 72.500H1009.500M982.500 78.500H1009.500M982.500 84.500H1009.500M989.500 66.500V90.500M1002.500 66.500V90.500" fill="none" stroke="#9a9a9a" shape-rendering="crispEdges"/><rect x="996.500" y="83.500" width="15" height="12" fill="#fff" stroke="#8a8a8a" shape-rendering="crispEdges"/></svg>
<span style="left:1000.20px;top:79.30px;transform:scaleX(1.1143);font-size:13px;color:#444;">≠</span>
<svg style="left:1078px;top:67px" width="32" height="30" viewBox="1078 67 32 30"><rect x="1086" y="74" width="17" height="14" fill="#c3d3ea"/><path d="M1079.500 68.500H1103.500V88.500H1079.500ZM1079.500 73.500H1103.500M1079.500 78.500H1103.500M1079.500 83.500H1103.500M1085.500 68.500V88.500M1091.500 68.500V88.500M1097.500 68.500V88.500" fill="none" stroke="#9a9a9a" shape-rendering="crispEdges"/><path d="M1108 73L1108.500 80.500L1100.500 88.500L1097 85Z" fill="#8a8a8a"/><path d="M1100 83.500L1103 86.500" stroke="#fff" stroke-width="1"/><path d="M1096 85.500L1099 88.500Q1099.500 95.800 1085.300 95.800Q1089.500 92.500 1090.500 89Q1092 85.500 1096 85.500Z" fill="#3f74b8"/><ellipse cx="1095.800" cy="89.800" rx="2.600" ry="1.500" transform="rotate(-40 1095.500 89.500)" fill="#dfe8f5"/></svg>
<svg style="left:1363px;top:73.5px" width="5" height="3" viewBox="0 0 5 3"><path d="M0 3H5L2.500 0Z" fill="#cfcfcf"/></svg>
<svg style="left:1363px;top:94px" width="5" height="3" viewBox="0 0 5 3"><path d="M0 0H5L2.5 3Z" fill="#666"/></svg>
<div style="left:1363px;top:111px;width:5px;height:1px;background:#666;"></div>
<svg style="left:1363px;top:114px" width="5" height="3" viewBox="0 0 5 3"><path d="M0 0H5L2.5 3Z" fill="#666"/></svg>
<svg style="left:1392px;top:65px" width="28" height="29" viewBox="1392 65 28 29"><path d="M1393.500 66.500H1407.500V71.500H1393.500ZM1400.500 66.500V71.500" fill="none" stroke="#8a8a8a" shape-rendering="crispEdges"/><path d="M1404.500 74.500H1418.500V79.500H1404.500ZM1411.500 74.500V79.500" fill="#c3d3ea" stroke="#8a8a8a" shape-rendering="crispEdges"/><path d="M1393.500 82.500H1407.500V92.500H1393.500ZM1400.500 82.500V92.500M1393.500 87.500H1407.500" fill="none" stroke="#8a8a8a" shape-rendering="crispEdges"/><path d="M1401 77H1395M1397.800 74L1394.800 77L1397.800 80" fill="none" stroke="#3f74b8" stroke-width="1.6"/></svg>
<svg style="left:1442px;top:65px" width="32" height="30" viewBox="1442 65 32 30"><path d="M1443.500 66.500H1457.500V71.500H1443.500ZM1450.500 66.500V71.500" fill="none" stroke="#8a8a8a" shape-rendering="crispEdges"/><path d="M1449.500 74.500H1457.500V79.500H1449.500Z" fill="#c3d3ea" stroke="#8a8a8a" shape-rendering="crispEdges"/><path d="M1457.500 74.500L1461 77L1457.500 79.500Z" fill="#c3d3ea"/><path d="M1443.500 83.500H1457.500V93.500H1443.500ZM1450.500 83.500V93.500M1443.500 88.500H1457.500" fill="none" stroke="#8a8a8a" shape-rendering="crispEdges"/><path d="M1458.500 72.500Q1464 76 1471.500 84.500M1471.500 72.500Q1464 77 1458.500 84.500" fill="none" stroke="#dc5a26" stroke-width="1.9"/></svg>
<svg style="left:1493px;top:64px" width="30" height="33" viewBox="1493 64 30 33"><path d="M1494.500 65V70M1516.500 65V70M1496 67.500H1515M1498.500 65.500L1496.500 67.500L1498.500 69.500M1512.500 65.500L1514.500 67.500L1512.500 69.500" fill="none" stroke="#3f74b8" stroke-width="1"/><rect x="1502" y="77" width="7" height="9" fill="#3f74b8"/><path d="M1494.500 71.500H1521.500V91.500H1494.500ZM1494.500 76.500H1521.500M1494.500 86.500H1521.500M1501.500 71.500V91.500M1509.500 71.500V91.500M1516.500 71.500V91.500" fill="none" stroke="#9a9a9a" shape-rendering="crispEdges"/><path d="M1494.500 91.500V95.500H1501.500L1503 93.500L1504.500 95.500H1510.500L1513 91.500" fill="#fff" stroke="#9a9a9a"/></svg>
<span style="left:1541.29px;top:61.55px;transform:scaleX(1.2083);font-size:21.5px;color:#333;">Σ</span>
<svg style="left:1542px;top:86px" width="16" height="18" viewBox="1542 86 16 18"><rect x="1543.500" y="87.500" width="13" height="15" fill="#fff" stroke="#8a8a8a" shape-rendering="crispEdges"/><rect x="1543" y="87" width="14" height="3" fill="#6a6a6a"/><path d="M1550 92V100M1546.800 97L1550 100.200L1553.200 97" fill="none" stroke="#3f74b8" stroke-width="1.6"/></svg>
<svg style="left:1542px;top:110px" width="16" height="16" viewBox="1542 110 16 16"><path d="M1544 120L1552 112L1556.500 116L1548.500 124Z" fill="#ee7fa3"/><path d="M1544 120L1546.500 117.500L1551 121.500L1548.500 124Z" fill="#f4a8c0"/><path d="M1548 124.500H1557" stroke="#6a6a6a" shape-rendering="crispEdges"/></svg>
<span style="left:1699.00px;top:63.46px;font-size:16px;color:#3a6db3;">A</span>
<span style="left:1700.00px;top:77.76px;transform:scaleX(0.9000);font-size:16px;color:#94489b;">Z</span>
<svg style="left:1710px;top:73px" width="19" height="17" viewBox="1710 73 19 17"><path d="M1711 74.500H1728L1721.500 81.500V88.500H1717.500V81.500Z" fill="#8a8a8a"/><path d="M1719 82.500V87.500H1720V82.500Z" fill="#fff"/><path d="M1711 74.500H1728" stroke="#6a6a6a" stroke-width="1"/></svg>
<svg style="left:1759px;top:67px" width="28" height="25" viewBox="1759 67 28 25"><path d="M1766 68H1770V71H1771.500V77H1774.500V71H1776V68H1780V71H1782V76H1784V80H1786V91H1776V84H1770V91H1760V80H1762V76H1764V71H1766Z" fill="#6a6a6a"/><path d="M1761.500 81V90M1784.500 81V90M1763.500 77V80M1782.500 77V80M1765.500 72V76M1780.500 72V76" stroke="#e8e8e8" stroke-width="1"/></svg>
<svg style="left:1907px;top:138px" width="12" height="8" viewBox="1907 138 12 8"><path d="M1909.200 144.500L1913.600 140.100L1918 144.500" fill="none" stroke="#666" stroke-width="1.8"/></svg>
<svg style="left:225px;top:139px" width="8" height="8" viewBox="225 139 8 8"><path d="M225.5 144V139.5H230" fill="none" stroke="#777" shape-rendering="crispEdges"/><path d="M228 142L231.5 145.5M232 142.5V146H228.5" fill="none" stroke="#777" stroke-width="1.1"/></svg>
<svg style="left:432px;top:139px" width="8" height="8" viewBox="432 139 8 8"><path d="M432.5 144V139.5H437" fill="none" stroke="#777" shape-rendering="crispEdges"/><path d="M435 142L438.5 145.5M439 142.5V146H435.5" fill="none" stroke="#777" stroke-width="1.1"/></svg>
<svg style="left:796px;top:139px" width="8" height="8" viewBox="796 139 8 8"><path d="M796.5 144V139.5H801" fill="none" stroke="#777" shape-rendering="crispEdges"/><path d="M799 142L802.5 145.5M803 142.5V146H799.5" fill="none" stroke="#777" stroke-width="1.1"/></svg>
<svg style="left:936px;top:139px" width="8" height="8" viewBox="936 139 8 8"><path d="M936.5 144V139.5H941" fill="none" stroke="#777" shape-rendering="crispEdges"/><path d="M939 142L942.5 145.5M943 142.5V146H939.5" fill="none" stroke="#777" stroke-width="1.1"/></svg>
<svg style="left:154px;top:166px" width="19" height="17" viewBox="154 166 19 17"><path d="M155.500 167.500L171.500 182M171.500 167.500L155.500 182" stroke="#c6c6c6" stroke-width="2"/></svg>
<svg style="left:190px;top:166px" width="21" height="17" viewBox="190 166 21 17"><path d="M191.500 175.500L197.500 181.500L209 168" fill="none" stroke="#c6c6c6" stroke-width="2.6"/></svg>
<span class="s" style="left:226.00px;top:163.38px;letter-spacing:0.600px;transform:scaleX(1.1369);font-size:22px;color:#555;font-style:italic;">fx</span>
<svg style="left:1908px;top:169px" width="13" height="10" viewBox="1908 169 13 10"><path d="M1909.500 177L1914.500 172L1919.500 177" fill="none" stroke="#777" stroke-width="2.4"/></svg>
<svg style="left:58px;top:1029px" width="16" height="15" viewBox="58 1029 16 15"><path d="M60.500 1035.500V1042.500H71.500V1031.500H66" fill="none" stroke="#fff"/><rect x="66" y="1031" width="6" height="2" fill="#fff"/><path d="M62.3 1036h2v1.200h-2zM65.6 1036h2v1.200h-2zM68.9 1036h2v1.200h-2zM62.3 1038h2v1.200h-2zM65.6 1038h2v1.200h-2zM68.9 1038h2v1.200h-2zM62.3 1040h2v1.200h-2zM65.6 1040h2v1.200h-2zM68.9 1040h2v1.200h-2z" fill="#fff"/><circle cx="62" cy="1033" r="3.100" fill="#e9e9e9"/></svg>
<svg style="left:1644px;top:1029px" width="15" height="15" viewBox="1644 1029 15 15"><path d="M1645.500 1030.500H1657.500V1042.500H1645.500ZM1649.500 1030.500V1042.500M1653.500 1030.500V1042.500M1645.500 1034.500H1657.500M1645.500 1038.500H1657.500" fill="none" stroke="#fff" shape-rendering="crispEdges"/></svg>
<svg style="left:1682px;top:1029px" width="16" height="15" viewBox="1682 1029 16 15"><path d="M1683.500 1030.500H1696.500V1042.500H1683.500ZM1686.500 1033.500H1693.500V1040.500H1686.500ZM1688 1035.500H1692M1688 1037.500H1692" fill="none" stroke="#fff" shape-rendering="crispEdges"/></svg>
<svg style="left:1720px;top:1029px" width="16" height="15" viewBox="1720 1029 16 15"><path d="M1721.500 1030.500H1734.500V1042.500H1721.500Z" fill="none" stroke="#fff" shape-rendering="crispEdges"/><path d="M1722 1031H1725V1038H1722ZM1726 1031H1729V1038H1726Z" fill="#fff" shape-rendering="crispEdges"/><path d="M1722 1038.500H1730" stroke="#fff" shape-rendering="crispEdges"/></svg>
<div style="left:67px;top:1049px;width:54px;height:7px;background:#a3b0d2;border-radius:2px 2px 0 0;"></div>
<div style="left:192px;top:1049px;width:50px;height:7px;background:#a3b0d2;border-radius:2px 2px 0 0;"></div>
<div style="left:316px;top:1049px;width:53px;height:7px;background:#a9b6d8;border-radius:2px 2px 0 0;"></div>
<div style="left:378px;top:1049px;width:58px;height:7px;background:#d3daea;border-radius:2px 2px 0 0;"></div>
<div style="left:123px;top:1050px;width:2px;height:6px;background:#5f78b3;"></div>
<div style="left:244px;top:1050px;width:2px;height:6px;background:#5f78b3;"></div>
<div style="left:371px;top:1050px;width:2px;height:6px;background:#5f78b3;"></div>
<svg style="left:18px;top:1049px" width="34" height="7" viewBox="18 1049 34 7"><ellipse cx="35" cy="1063" rx="15.500" ry="14" fill="#9fb0d6" stroke="#c9d3ea" stroke-width="1"/></svg>
<svg style="left:84px;top:1052px" width="12" height="4" viewBox="84 1052 12 4"><rect x="85" y="1053" width="9" height="3" fill="#e4c77a"/></svg>
<svg style="left:144px;top:1052px" width="20" height="4" viewBox="144 1052 20 4"><path d="M145 1056V1053H158L162 1056Z" fill="#f2f4f8"/><rect x="145" y="1053" width="2" height="3" fill="#3a63b5"/></svg>
<svg style="left:208px;top:1052px" width="20" height="4" viewBox="208 1052 20 4"><ellipse cx="218" cy="1058" rx="8" ry="5.500" fill="#e8552a"/></svg>
<svg style="left:266px;top:1051px" width="22" height="5" viewBox="266 1051 22 5"><path d="M268 1053H273L271 1056M285 1052L280 1056" fill="none" stroke="#f01818" stroke-width="1.600"/></svg>
<svg style="left:328px;top:1051px" width="20" height="5" viewBox="328 1051 20 5"><path d="M329 1056L345 1052V1056Z" fill="#2e8b57"/></svg>
<svg style="left:394px;top:1051px" width="20" height="5" viewBox="394 1051 20 5"><path d="M395 1056L411 1052V1056Z" fill="#2f55a4"/></svg>
<div style="left:1913px;top:1049px;width:15px;height:7px;background:#9ba4b8;"></div>
</body></html>
